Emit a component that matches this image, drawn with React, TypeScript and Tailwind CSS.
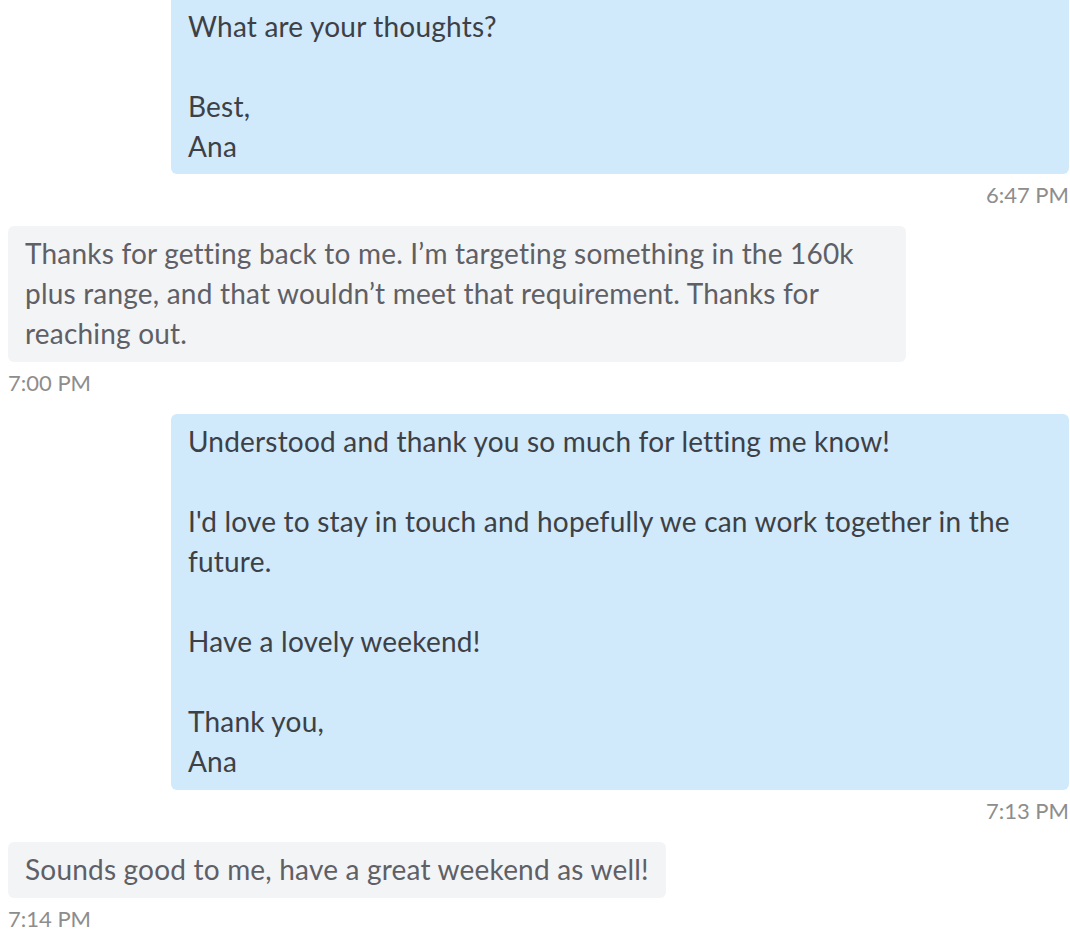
import React from 'react';

type Msg = {
  from: 'me' | 'them';
  lines: string[];
  time: string;
};

const messages: Msg[] = [
  {
    from: 'me',
    lines: ['What are your thoughts?', '', 'Best,', 'Ana'],
    time: '6:47 PM',
  },
  {
    from: 'them',
    lines: [
      'Thanks for getting back to me. I\u2019m targeting something in the 160k',
      'plus range, and that wouldn\u2019t meet that requirement. Thanks for',
      'reaching out.',
    ],
    time: '7:00 PM',
  },
  {
    from: 'me',
    lines: [
      'Understood and thank you so much for letting me know!',
      '',
      "I'd love to stay in touch and hopefully we can work together in the",
      'future.',
      '',
      'Have a lovely weekend!',
      '',
      'Thank you,',
      'Ana',
    ],
    time: '7:13 PM',
  },
  {
    from: 'them',
    lines: ['Sounds good to me, have a great weekend as well!'],
    time: '7:14 PM',
  },
];

function Bubble({ msg, first }: { msg: Msg; first: boolean }) {
  const mine = msg.from === 'me';
  // bubbles that wrap fill the max width
  const wraps = msg.lines.length > 1;
  return (
    <div className={`flex flex-col ${mine ? 'items-end' : 'items-start'}`}>
      <div
        className={
          mine
            ? `w-[898px] bg-[#d0e9fb] text-[#3d4045] rounded-md pl-[17px] pr-4 ${first ? 'rounded-t-none pt-[6px] pb-2' : 'pt-[7px] pb-[9px]'}`
            : `${wraps ? 'w-[898px]' : ''} bg-[#f3f4f6] text-[#5e6066] rounded-md pl-[17px] pr-[17px] pt-[7px] pb-[9px]`
        }
      >
        {msg.lines.map((line, i) => (
          <div key={i} className="h-10 leading-10 whitespace-nowrap">
            {line || '\u00a0'}
          </div>
        ))}
      </div>
      <div className="mt-[7px] mb-[17px] h-7 leading-7 text-[22px] tracking-normal text-[#8d8d8d]">{msg.time}</div>
    </div>
  );
}

export default function App() {
  return (
    <div
      className="bg-white min-h-screen pl-2 pr-px text-[28px] tracking-[0.2px] overflow-hidden"
      style={{ fontFamily: 'Lato, "Noto Sans", sans-serif' }}
    >
      {messages.map((m, i) => (
        <Bubble key={i} msg={m} first={i === 0} />
      ))}
    </div>
  );
}
